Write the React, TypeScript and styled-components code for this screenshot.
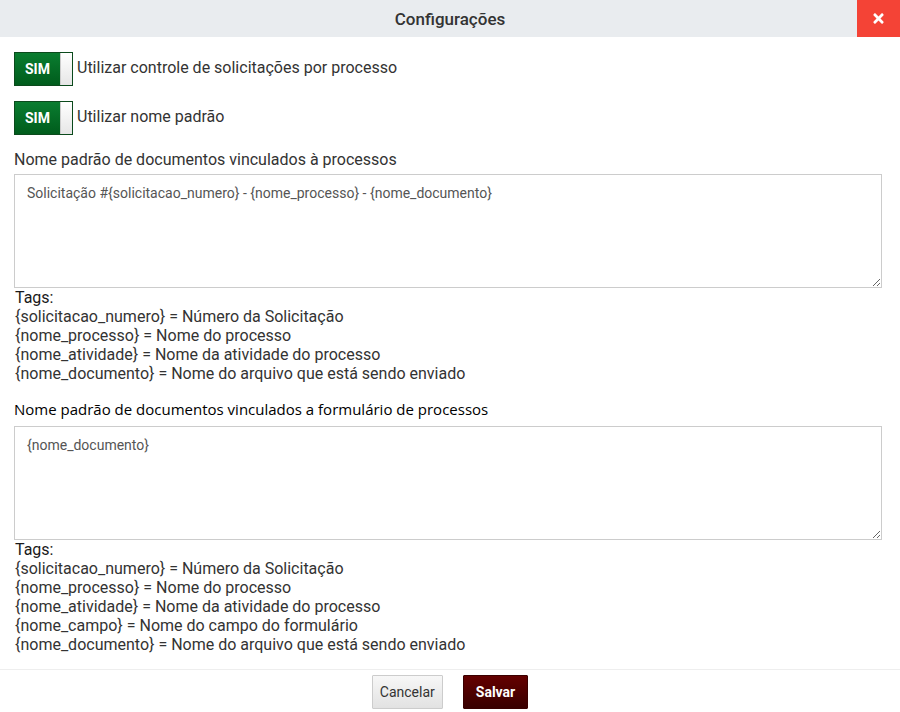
import React from "react";
import styled, { createGlobalStyle } from "styled-components";
import { FaTimes } from "react-icons/fa";

const Global = createGlobalStyle`
  html, body { margin: 0; padding: 0; background: #fff; }
  body { font-family: Roboto, "Liberation Sans", Arial, sans-serif; color: #333; }
  * { box-sizing: border-box; }
`;

const Modal = styled.div`
  width: 900px;
  height: 712px;
  display: flex;
  flex-direction: column;
  background: #fff;
`;

const Header = styled.div`
  height: 37px;
  display: grid;
  grid-template-columns: 43px 1fr 43px;
  align-items: center;
  background: #e9ecef;
`;

const Title = styled.div`
  grid-column: 2;
  text-align: center;
  font-size: 17px;
  font-weight: 500;
  color: #333;
`;

const Close = styled.button`
  grid-column: 3;
  height: 37px;
  width: 43px;
  border: none;
  background: #f44336;
  color: #fff;
  display: flex;
  align-items: center;
  justify-content: center;
  padding: 0;
`;

const Body = styled.div`
  padding: 15px 18px 0 14px;
  display: flex;
  flex-direction: column;
`;

const ToggleRow = styled.div`
  display: flex;
  align-items: center;
  gap: 4px;
  margin-bottom: 15px;
  font-size: 16px;
  line-height: 20px;
  color: #333;
`;

const ToggleText = styled.span`
  position: relative;
  top: -1px;
`;

const Toggle = styled.div`
  display: flex;
  width: 59px;
  height: 34px;
  border: 1px solid #0b4a1c;
`;

const ToggleOn = styled.div`
  width: 45px;
  background: linear-gradient(#0a7d30, #005c1c);
  color: #fff;
  font-weight: 700;
  font-size: 14px;
  display: flex;
  align-items: center;
  justify-content: center;
`;

const Knob = styled.div`
  flex: 1;
  background: linear-gradient(#ffffff, #e6e6e6);
  border-left: 1px solid #ccc;
`;

const Label = styled.div<{ $alt?: boolean }>`
  font-family: ${(p) => (p.$alt ? `"Open Sans", "Liberation Sans", sans-serif` : `Roboto, "Liberation Sans", sans-serif`)};
  font-size: ${(p) => (p.$alt ? "15px" : "16px")};
  line-height: 22px;
  color: ${(p) => (p.$alt ? "#000" : "#333")};
  margin-top: ${(p) => (p.$alt ? "15px" : "-1px")};
  margin-bottom: ${(p) => (p.$alt ? "6px" : "3px")};
`;

const Area = styled.textarea`
  display: block;
  width: 868px;
  height: 114px;
  border: 1px solid #ccc;
  padding: 8px 12px;
  font-family: Roboto, "Liberation Sans", sans-serif;
  font-size: 14px;
  line-height: 20px;
  color: #555;
  resize: vertical;
  outline: none;
  margin: 0;
`;

const Tags = styled.div`
  font-size: 16px;
  line-height: 19px;
  color: #333;
  padding-left: 1px;
`;

const TagsTitle = styled.div`
  color: #1a1a1a;
`;

const Footer = styled.div`
  margin-top: auto;
  border-top: 1px solid #eeeeee;
  padding: 5px 0 3px;
  display: flex;
  justify-content: center;
  gap: 20px;
`;

const Btn = styled.button<{ $primary?: boolean }>`
  height: 34px;
  padding: 0 ${(p) => (p.$primary ? "12px" : "7px")};
  font-family: Roboto, "Liberation Sans", sans-serif;
  font-size: 14px;
  font-weight: ${(p) => (p.$primary ? 700 : 400)};
  color: ${(p) => (p.$primary ? "#fff" : "#333")};
  background: ${(p) => (p.$primary ? "linear-gradient(#640000, #380000)" : "linear-gradient(#f7f7f7, #e2e2e2)")};
  border: 1px solid ${(p) => (p.$primary ? "#3a0000" : "#ccc")};
  border-radius: 1px;
`;

const tags1 = [
  "{solicitacao_numero} = Número da Solicitação",
  "{nome_processo} = Nome do processo",
  "{nome_atividade} = Nome da atividade do processo",
  "{nome_documento} = Nome do arquivo que está sendo enviado",
];

const tags2 = [
  "{solicitacao_numero} = Número da Solicitação",
  "{nome_processo} = Nome do processo",
  "{nome_atividade} = Nome da atividade do processo",
  "{nome_campo} = Nome do campo do formulário",
  "{nome_documento} = Nome do arquivo que está sendo enviado",
];

export default function App() {
  return (
    <Modal>
      <Global />
      <Header>
        <Title>Configurações</Title>
        <Close>
          <FaTimes size={15} />
        </Close>
      </Header>
      <Body>
        <ToggleRow>
          <Toggle>
            <ToggleOn>SIM</ToggleOn>
            <Knob />
          </Toggle>
          <ToggleText>Utilizar controle de solicitações por processo</ToggleText>
        </ToggleRow>
        <ToggleRow>
          <Toggle>
            <ToggleOn>SIM</ToggleOn>
            <Knob />
          </Toggle>
          <ToggleText>Utilizar nome padrão</ToggleText>
        </ToggleRow>
        <Label>Nome padrão de documentos vinculados à processos</Label>
        <Area defaultValue="Solicitação #{solicitacao_numero} - {nome_processo} - {nome_documento}" />
        <Tags>
          <TagsTitle>Tags:</TagsTitle>
          {tags1.map((t) => (
            <div key={t}>{t}</div>
          ))}
        </Tags>
        <Label $alt>Nome padrão de documentos vinculados a formulário de processos</Label>
        <Area defaultValue="{nome_documento}" />
        <Tags>
          <TagsTitle>Tags:</TagsTitle>
          {tags2.map((t) => (
            <div key={t}>{t}</div>
          ))}
        </Tags>
      </Body>
      <Footer>
        <Btn>Cancelar</Btn>
        <Btn $primary>Salvar</Btn>
      </Footer>
    </Modal>
  );
}
